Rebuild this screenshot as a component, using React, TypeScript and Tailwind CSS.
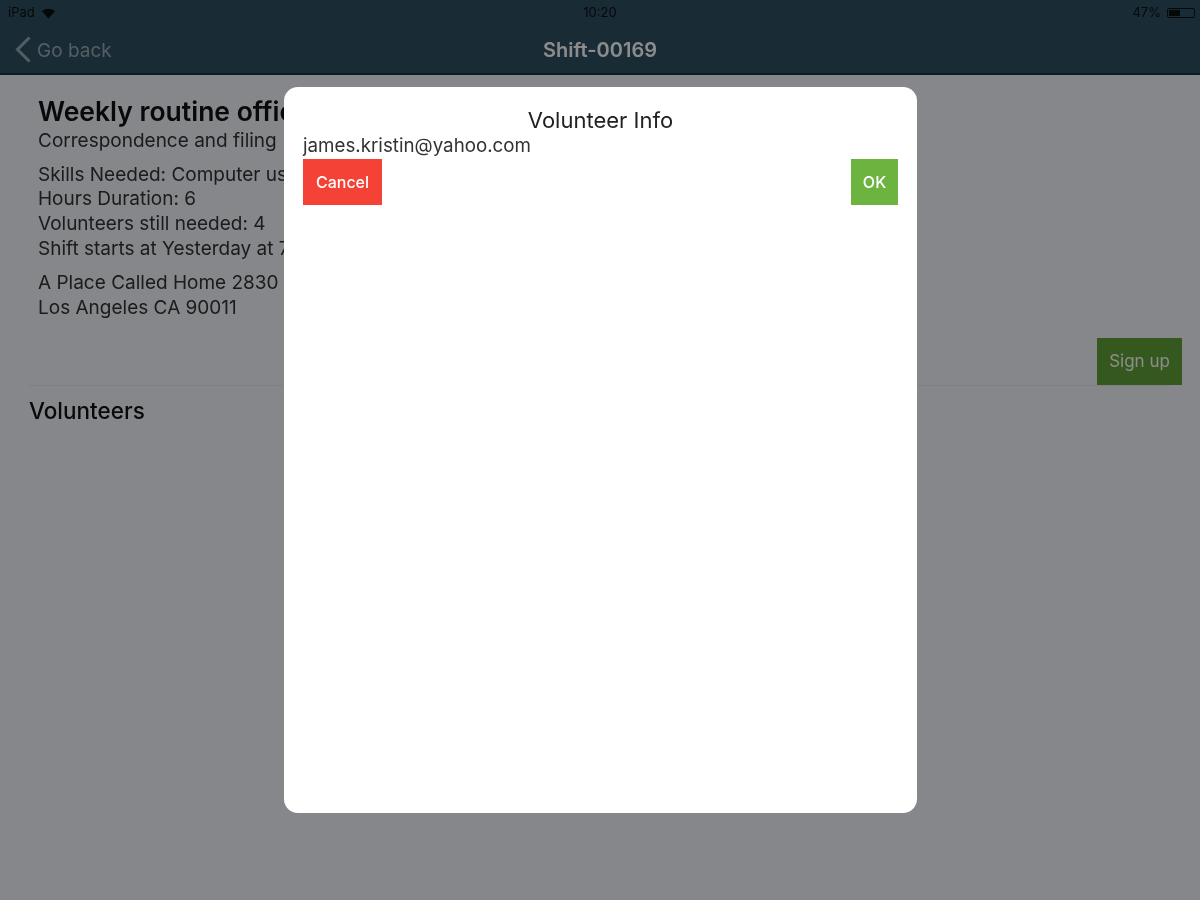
export default function App() {
  return (
    <div className="relative h-[900px] w-[1200px] overflow-hidden bg-[#f4f6fd] font-['Inter',sans-serif] text-[#333] blur-[0.4px]">
      {/* Header */}
      <header className="h-[75px] border-b-2 border-[#0f3a40] bg-[#2f5062]">
        <div className="grid h-[26px] grid-cols-3 items-center px-2 text-[13px] text-[#0a0f12]">
          <div className="flex items-center gap-[6px]">
            <span>iPad</span>
            <svg width="15" height="11" viewBox="0 0 14 11" fill="currentColor">
              <path d="M7 10.5 0.5 3.2C4.2 0 9.8 0 13.5 3.2Z" />
            </svg>
          </div>
          <div className="text-center">10:20</div>
          <div className="flex items-center justify-end gap-[6px]">
            <span>47%</span>
            <div className="-mr-[3px] flex h-[10px] w-[28px] rounded-[2px] border border-[#0a0f12] p-px">
              <div className="w-[47%] bg-[#0a0f12]" />
            </div>
          </div>
        </div>
        <div className="relative flex h-[47px] items-center justify-center">
          <div className="absolute left-[15px] flex items-center gap-[6px] text-[#98abb5]">
            <svg width="16" height="27" viewBox="0 0 16 27" fill="none" stroke="currentColor" strokeWidth="3">
              <polyline points="14.5,1.5 2.5,13.5 14.5,25.5" />
            </svg>
            <span className="pt-[3px] text-[19px]">Go back</span>
          </div>
          <h1 className="text-[20px] font-semibold text-white">Shift-00169</h1>
        </div>
      </header>

      {/* Shift details */}
      <main className="px-[29px] pt-[21px]">
        <div className="pl-[9px] text-[19px] leading-[25px]">
          <h2 className="text-[26.5px] leading-[30px] font-semibold text-[#111]">Weekly routine office</h2>
          <p className="mt-[2px] mb-[9px] leading-[25px]">Correspondence and filing</p>
          <p>Skills Needed: Computer use</p>
          <p className="-mt-[1px]">Hours Duration: 6</p>
          <p>Volunteers still needed: 4</p>
          <p className="mb-[9px]">Shift starts at Yesterday at 7</p>
          <p>A Place Called Home 2830</p>
          <p>Los Angeles CA 90011</p>
        </div>
        <div className="mt-[18px] flex justify-end border-b border-[#e8e9ee]">
          <button className="-mr-[11px] h-[47px] w-[85px] bg-[#60a038] text-[17px] text-white">Sign up</button>
        </div>
        <h3 className="mt-[8px] text-[22.5px] font-medium text-[#111]">Volunteers</h3>
      </main>

      {/* Volunteer dialog */}
      <div className="absolute inset-0 bg-black/45">
        <div className="absolute top-[87px] left-[284px] h-[726px] w-[633px] rounded-[14px] bg-white px-[19px] pt-[20px]">
          <h4 className="text-center text-[22px] leading-[26px] text-[#222]">Volunteer Info</h4>
          <p className="text-[18.75px] leading-[26px]">james.kristin@yahoo.com</p>
          <div className="flex justify-between">
            <button className="h-[46px] w-[79px] bg-[#f44336] text-[16px] font-medium text-white">Cancel</button>
            <button className="h-[46px] w-[47px] bg-[#6db33f] text-[16px] font-medium text-white">OK</button>
          </div>
        </div>
      </div>
    </div>
  );
}
